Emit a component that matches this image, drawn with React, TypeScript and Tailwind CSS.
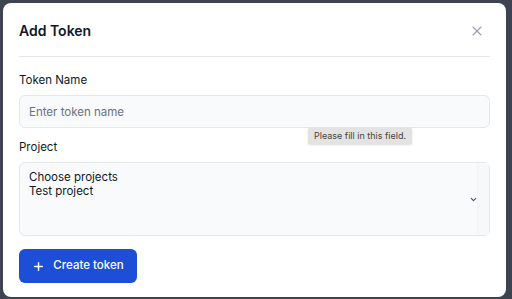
import { Plus, X, ChevronDown } from "lucide-react";

export default function App() {
  return (
    <div
      className="w-[512px] h-[299px] bg-[#3d4350] p-[3px] pb-[2px] pr-[6px] overflow-hidden"
      style={{ fontFamily: "Inter, 'Noto Sans', sans-serif" }}
    >
      <div className="relative h-full w-full bg-white rounded-[8px] px-4 flex flex-col">
        <div className="flex items-center justify-between pt-[17px] pb-[14px] border-b border-gray-200">
          <h2 className="text-[14px] font-semibold text-gray-900 leading-[22px]">Add Token</h2>
          <button type="button" className="text-gray-400 mr-[5px]">
            <X size={16} strokeWidth={1.75} />
          </button>
        </div>

        <label className="mt-[14px] text-[11.5px] text-gray-900 leading-[18px]">Token Name</label>
        <div className="relative mt-[6px]">
          <input
            type="text"
            placeholder="Enter token name"
            className="w-full h-[33px] rounded-[6px] bg-gray-50 border border-gray-200 px-[9px] text-[11.5px] text-gray-900 placeholder:text-gray-500 outline-none"
          />
          <div className="absolute left-[289px] top-[33px] h-[16px] px-[6px] bg-[#e3e3e3] text-[9px] text-[#444] leading-[16px] shadow-sm rounded-[1px]">
            Please fill in this field.
          </div>
        </div>

        <label className="mt-[10px] text-[11.5px] text-gray-900 leading-[18px]">Project</label>
        <div className="relative mt-[6px] h-[74px] rounded-[6px] bg-gray-50 border border-gray-200 flex">
          <div className="flex-1 pl-[9px] pt-[7px] text-[11.5px] text-gray-900 leading-[14px]">
            <div>Choose projects</div>
            <div>Test project</div>
          </div>
          <div className="w-[12px] border-l border-gray-100 bg-[#f7f8fa]" />
          <ChevronDown
            size={9}
            strokeWidth={3}
            className="absolute right-[11px] top-[32px] text-gray-600"
          />
        </div>

        <button
          type="button"
          className="mt-[13px] self-start h-[34px] w-[118px] rounded-[6px] bg-[#1c4ed8] text-white text-[11.5px] font-medium flex items-center justify-center gap-[8px]"
        >
          <Plus size={13} strokeWidth={2.75} />
          Create token
        </button>
      </div>
    </div>
  );
}
